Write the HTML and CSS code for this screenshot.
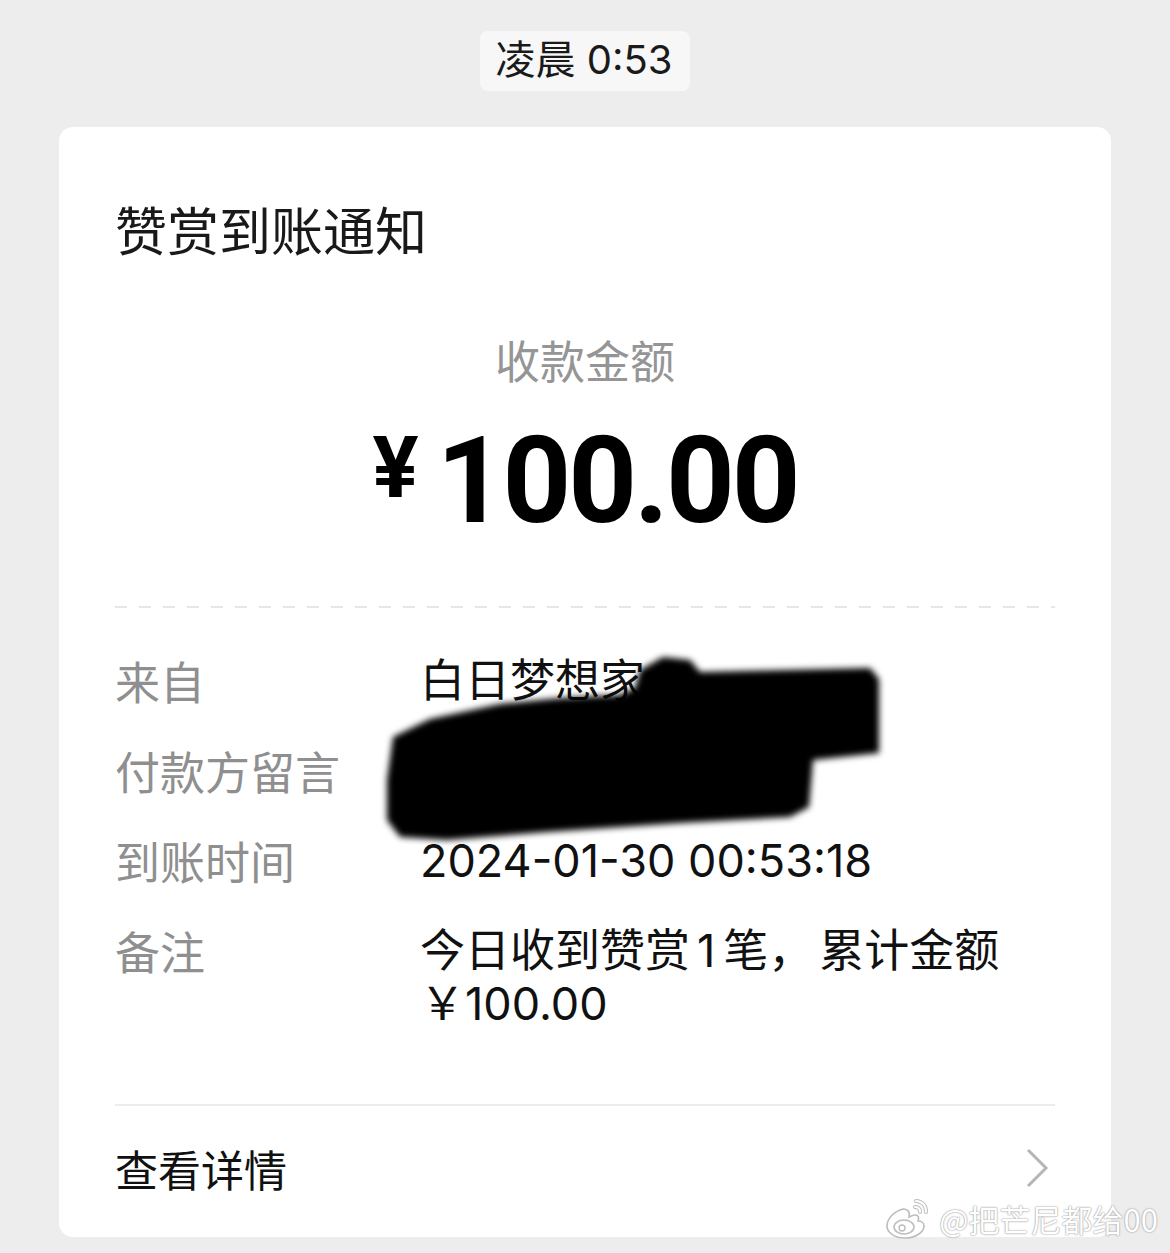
FILE: index.html
```html
<!DOCTYPE html>
<html lang="zh-CN">
<head>
<meta charset="utf-8">
<title>赞赏到账通知</title>
<link rel="stylesheet" href="styles.css">
</head>
<body>
<div class="page">
  <div class="time-wrap"><span class="time-pill">凌晨 0:53</span></div>
  <div class="card">
    <h1 class="title">赞赏到账通知</h1>
    <div class="amount-label">收款金额</div>
    <div class="amount"><span class="yen">¥</span><span class="num">100.00</span></div>
    <div class="dash"></div>
    <div class="details">
      <div class="label">来自</div><div class="value">白日梦想家</div>
      <div class="label">付款方留言</div><div class="value">&nbsp;</div>
      <div class="label">到账时间</div><div class="value">2024-01-30 00:53:18</div>
      <div class="label">备注</div><div class="value">今日收到赞赏<span class="gap-num">1</span>笔，<span class="gap-after">累计金额</span><br>￥100.00</div>
    </div>
    <div class="line"></div>
    <div class="more">
      <span>查看详情</span>
      <svg class="chev" width="24" height="40" viewBox="0 0 24 40"><polyline points="3,2 21,20 3,38" fill="none" stroke="#b5b5b5" stroke-width="3"/></svg>
    </div>
    <svg class="redact" width="530" height="210" viewBox="0 0 530 210">
      <defs><filter id="b" x="-10%" y="-10%" width="120%" height="120%"><feGaussianBlur stdDeviation="3"/></filter></defs>
      <polygon filter="url(#b)" fill="#000" points="14,90 51,72 121,57 181,51 241,48 256,41 261,23 284,10 311,13 321,25 491,21 500,32 500,106 434,113 430,160 411,170 301,176 168,185 68,193 21,190 8,173 8,133"/>
    </svg>
  </div>
  <div class="watermark">
    <svg class="weibo" width="46" height="44" viewBox="0 0 46 44">
      <path d="M18 12c-8 2-16 9-16 17 0 7 8 12 18 12 11 0 19-6 19-12 0-4-4-5-6-5 1-3 1-6-3-6-2 0-4 1-6 2 1-4 0-8-6-8z" fill="#fff" stroke="#bdbdbd" stroke-width="1.6"/>
      <ellipse cx="19" cy="30" rx="10" ry="7" fill="#fff" stroke="#bdbdbd" stroke-width="1.6"/>
      <circle cx="17" cy="31" r="3" fill="#fff" stroke="#bdbdbd" stroke-width="1.4"/>
      <path d="M31 4a10 10 0 0 1 10 11" fill="none" stroke="#bdbdbd" stroke-width="4" stroke-linecap="round"/>
      <path d="M31 4a10 10 0 0 1 10 11" fill="none" stroke="#fff" stroke-width="2" stroke-linecap="round"/>
      <path d="M30 10a4.5 4.5 0 0 1 5 5" fill="none" stroke="#bdbdbd" stroke-width="4" stroke-linecap="round"/>
      <path d="M30 10a4.5 4.5 0 0 1 5 5" fill="none" stroke="#fff" stroke-width="2" stroke-linecap="round"/>
    </svg>
    <span class="wm-text">@把芒尼都给00</span>
  </div>
</div>
</body>
</html>
```

FILE: styles.css
```css
* { box-sizing: border-box; }
html, body { margin: 0; padding: 0; }
body {
  background: #ededed;
  font-family: Inter, "Noto Sans CJK SC", sans-serif;
  color: #111;
  width: 1170px;
  height: 1253px;
  overflow: hidden;
}
.page { position: relative; height: 1253px; }
.time-wrap { display: flex; justify-content: center; padding-top: 31px; }
.time-pill {
  display: block;
  height: 60px;
  line-height: 58px;
  padding: 0 17px 0 15px;
  background: #f7f7f7;
  border-radius: 8px;
  font-size: 40px;
  color: #1a1a1a;
}
.card {
  position: relative;
  margin: 36px 59px 0 59px;
  height: 1110px;
  background: #fff;
  border-radius: 14px;
  padding: 65px 56px 0 56px;
}
.title {
  margin: 0;
  font-size: 52px;
  line-height: 73px;
  font-weight: 400;
  color: #191919;
  font-family: "Noto Sans CJK SC", sans-serif;
}
.amount-label {
  margin-top: 63px;
  text-align: center;
  font-size: 45px;
  line-height: 63px;
  color: #959595;
  font-family: "Noto Sans CJK SC", sans-serif;
}
.amount {
  margin-top: 20px;
  display: flex;
  justify-content: center;
  align-items: flex-start;
  font-family: Roboto, sans-serif;
  font-weight: 700;
  color: #000;
}
.yen {
  font-size: 86px;
  line-height: 100px;
  margin-top: 7px;
  margin-right: 18px;
}
.num {
  font-size: 120px;
  line-height: 140px;
  letter-spacing: -3px;
}
.dash {
  margin-top: 55px;
  height: 2px;
  background: repeating-linear-gradient(to right, #e6e6e6 0 12px, transparent 12px 24px);
}
.details {
  margin-top: 46px;
  display: grid;
  grid-template-columns: 305px 1fr;
  row-gap: 37px;
  font-size: 45px;
  line-height: 53px;
}
.label { color: #8f8f8f; font-family: "Noto Sans CJK SC", sans-serif; }
.value { color: #111; }
.gap-num { margin: 0 8px 0 7px; }
.gap-after { margin-left: 6px; }
.line {
  margin-top: 74px;
  height: 2px;
  background: #ececec;
}
.more {
  margin-top: 32px;
  display: flex;
  align-items: center;
  justify-content: space-between;
  height: 60px;
  font-size: 43px;
  font-family: "Noto Sans CJK SC", sans-serif;
  color: #111;
}
.chev { margin-right: 6px; }
.redact {
  position: absolute;
  left: 320px;
  top: 520px;
}
.watermark {
  position: absolute;
  right: 12px;
  bottom: 12px;
  display: flex;
  align-items: center;
  gap: 8px;
}
.wm-text {
  font-family: "Noto Sans CJK SC", sans-serif;
  font-size: 31px;
  line-height: 40px;
  color: #fff;
  text-shadow: 0 0 2px #9a9a9a, 0 0 1px #9a9a9a;
}
```
